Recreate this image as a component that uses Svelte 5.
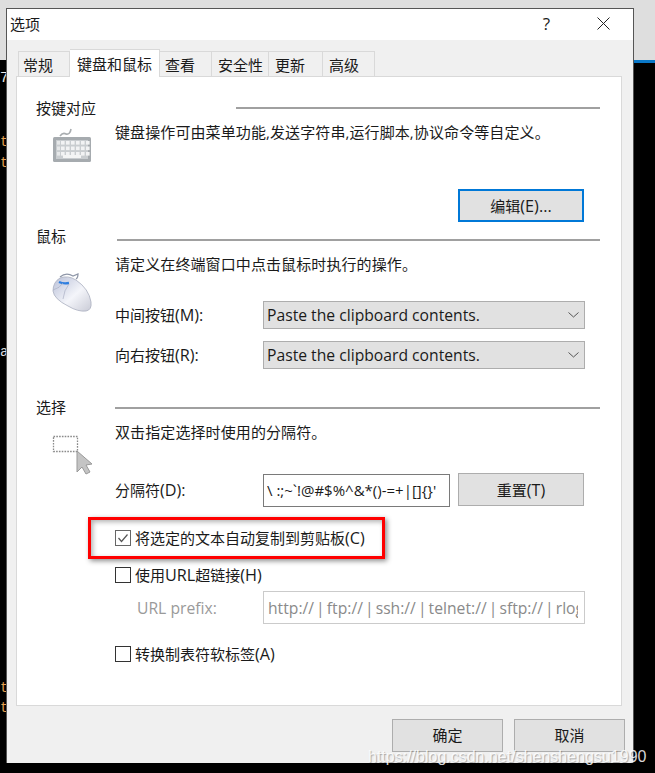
<script>
	const tabs = ['常规', '键盘和鼠标', '查看', '安全性', '更新', '高级'];
	const termBits = [
		{ text: '7', top: 70, color: '#eee' },
		{ text: 't', top: 134, color: '#e8a050' },
		{ text: 't', top: 155, color: '#e8a050' },
		{ text: 'a', top: 344, color: '#ddd' },
		{ text: 't', top: 680, color: '#e8a050' },
		{ text: 't', top: 700, color: '#e8a050' }
	];
	const keyRows = [
		[61, 66, 71, 76, 81, 86],
		[61, 66, 71, 76, 81, 86],
		[61, 66, 71, 76, 81, 86]
	];
</script>

<div class="desktop">
	<div class="strip"></div>
	<div class="blue-line"></div>
	{#each termBits as bit}
		<span class="term" style="top: {bit.top}px; color: {bit.color}">{bit.text}</span>
	{/each}

	<div class="window">
		<div class="titlebar">
			<span class="title">选项</span>
			<span class="help">?</span>
			<svg class="close" width="13" height="13" viewBox="0 0 13 13">
				<path d="M0.5 0.5 L12.5 12.5 M12.5 0.5 L0.5 12.5" stroke="#222" stroke-width="1" fill="none" />
			</svg>
		</div>

		<div class="body">
			<div class="tabs">
				{#each tabs as tab, i}
					<div class="tab" class:active={i === 1}>{tab}</div>
				{/each}
			</div>

			<div class="panel">
				<section class="keys">
					<div class="heading">
						<span class="heading-text">按键对应</span>
						<div class="rule"></div>
					</div>
					<div class="row">
						<div class="icon">
							<svg width="44" height="42" viewBox="50 126 44 42">
								<path d="M60 137 Q63 133 66 135 Q70 136 71 130" stroke="#a9adb0" stroke-width="1.6" fill="none" />
								<rect x="53" y="138" width="38" height="25" rx="1.5" fill="#a6abaf" />
								<rect x="56" y="141" width="32" height="19" fill="#c9cdd0" />
								{#each keyRows as row, r}
									{#each row as x}
										<rect {x} y={142 + r * 5.5} width="3.6" height="3.6" fill="#f2f3f4" />
									{/each}
									<rect x="57" y={142 + r * 5.5} width="3" height="3.6" fill="#e6e8e9" />
								{/each}
								<rect x="63" y="156" width="18" height="3" fill="#f4f5f5" />
							</svg>
						</div>
						<p class="desc">键盘操作可由菜单功能,发送字符串,运行脚本,协议命令等自定义。</p>
					</div>
					<div class="actions">
						<button class="btn focused">编辑<span class="lat">(E)...</span></button>
					</div>
				</section>

				<section class="mouse">
					<div class="heading">
						<span class="heading-text">鼠标</span>
						<div class="rule"></div>
					</div>
					<div class="row">
						<div class="icon">
							<svg width="44" height="46" viewBox="50 270 44 46">
								<defs>
									<linearGradient id="mouseBody" x1="0" y1="0" x2="1" y2="1">
										<stop offset="0" stop-color="#b9c0d8" />
										<stop offset="0.55" stop-color="#f4f5fa" />
										<stop offset="1" stop-color="#c9cbd6" />
									</linearGradient>
								</defs>
								<path d="M60 278 Q66 273 73 277 L78 275 Q78 279 76 280" stroke="#8f97a8" stroke-width="1.2" fill="none" />
								<path d="M53 292 Q53 283 60 279 Q68 276 76 281 Q89 290 91 303 Q92 311 86 312 Q78 313 68 307 Q54 300 53 292 Z" fill="url(#mouseBody)" stroke="#a9aebf" stroke-width="0.8" />
								<path d="M59 283 Q63 285 69 284" stroke="#2f7fe0" stroke-width="2.4" fill="none" />
								<path d="M69 285 Q64 291 63 300 M53 291 Q60 289 63 284" stroke="#aab0c4" stroke-width="0.7" fill="none" />
							</svg>
						</div>
						<p class="desc">请定义在终端窗口中点击鼠标时执行的操作。</p>
					</div>
					<div class="field first">
						<span class="label">中间按钮<span class="lat">(M):</span></span>
						<div class="select">
							<span>Paste the clipboard contents.</span>
							<svg width="11" height="6" viewBox="0 0 11 6">
								<path d="M0.5 0.5 L5.5 5 L10.5 0.5" stroke="#555" fill="none" />
							</svg>
						</div>
					</div>
					<div class="field">
						<span class="label">向右按钮<span class="lat">(R):</span></span>
						<div class="select">
							<span>Paste the clipboard contents.</span>
							<svg width="11" height="6" viewBox="0 0 11 6">
								<path d="M0.5 0.5 L5.5 5 L10.5 0.5" stroke="#555" fill="none" />
							</svg>
						</div>
					</div>
				</section>

				<section class="selection">
					<div class="heading">
						<span class="heading-text">选择</span>
						<div class="rule"></div>
					</div>
					<div class="row">
						<div class="icon">
							<svg width="44" height="46" viewBox="50 434 44 46">
								<rect x="53.5" y="437.5" width="24" height="15" fill="#fff" stroke="#8a8a8a" stroke-width="1.3" stroke-dasharray="1.6 1.2" />
								<path d="M77 452 L77 473 L82 468 L86 475 L90 473 L86 466 L92 465 Z" fill="#c4c4c4" stroke="#999" stroke-width="1" />
							</svg>
						</div>
						<p class="desc">双击指定选择时使用的分隔符。</p>
					</div>
					<div class="field sep">
						<span class="label">分隔符<span class="lat">(D):</span></span>
						<input class="text" readonly value={"\\ :;~`!@#$%^&*()-=+|[]{}'"} />
						<button class="btn reset">重置<span class="lat">(T)</span></button>
					</div>

					<div class="highlight">
						<label class="check">
							<span class="box checked">
								<svg width="14" height="14" viewBox="0 0 14 14">
									<path d="M2.5 7 L5.5 10.5 L11.5 3.5" stroke="#555" stroke-width="1.2" fill="none" />
								</svg>
							</span>
							<span>将选定的文本自动复制到剪贴板<span class="lat">(C)</span></span>
						</label>
					</div>
					<label class="check url">
						<span class="box"></span>
						<span>使用<span class="lat">URL</span>超链接<span class="lat">(H)</span></span>
					</label>
					<div class="field prefix">
						<span class="label muted">URL prefix:</span>
						<input class="text disabled" readonly value="http:// | ftp:// | ssh:// | telnet:// | sftp:// | rlogin://" />
					</div>
					<label class="check tabs-check">
						<span class="box"></span>
						<span>转换制表符软标签<span class="lat">(A)</span></span>
					</label>
				</section>
			</div>

			<div class="footer">
				<button class="btn footer-btn">确定</button>
				<button class="btn footer-btn">取消</button>
			</div>
		</div>
	</div>

	<span class="watermark">https://blog.csdn.net/shenshengsu1990</span>
</div>

<style>
	:global(body) {
		background: #000;
	}

	.desktop {
		position: relative;
		width: 655px;
		height: 773px;
		overflow: hidden;
		background: #000;
		font-family: "Open Sans", "Noto Sans CJK SC", sans-serif;
		font-size: 15px;
		color: #1a1a1a;
	}

	.lat {
		font-size: 16.2px;
	}

	.strip {
		position: absolute;
		left: 0;
		top: 0;
		width: 655px;
		height: 60px;
		background: #dedede;
	}

	.blue-line {
		position: absolute;
		left: 634px;
		top: 60px;
		width: 21px;
		height: 3px;
		background: #0a78c8;
	}

	.term {
		position: absolute;
		left: 0;
		font-family: "Liberation Mono", monospace;
		font-size: 14px;
		line-height: 16px;
	}

	.window {
		position: absolute;
		left: 6px;
		top: 8px;
		width: 628px;
		height: 755px;
		box-sizing: border-box;
		border: 1px solid #555;
		border-width: 1px 1px 0 1px;
		background: #f0f0f0;
		display: flex;
		flex-direction: column;
	}

	.titlebar {
		height: 31px;
		box-sizing: border-box;
		padding-bottom: 3px;
		background: #fff;
		display: flex;
		align-items: center;
		padding-left: 3px;
		flex: none;
	}

	.title {
		flex: 1;
	}

	.help {
		font-size: 17px;
		margin-right: 47px;
	}

	.close {
		margin-right: 23px;
	}

	.body {
		flex: 1;
		display: flex;
		flex-direction: column;
		padding: 10px 11px 0 9px;
		min-height: 0;
	}

	.tabs {
		display: flex;
		align-items: flex-end;
		height: 27px;
		padding-left: 2px;
		position: relative;
		z-index: 1;
		margin-bottom: -1px;
		flex: none;
	}

	.tab {
		box-sizing: border-box;
		height: 25px;
		line-height: 26px;
		border: 1px solid #d9d9d9;
		border-left: none;
		border-bottom: none;
		background: #f0f0f0;
		padding-left: 6px;
		white-space: nowrap;
		margin-bottom: 1px;
	}

	.tab:first-child {
		border-left: 1px solid #d9d9d9;
		padding-left: 4px;
	}

	.tab:nth-child(1) { width: 52px; }
	.tab:nth-child(2) { width: 90px; }
	.tab:nth-child(3) { width: 52px; padding-left: 5px; }
	.tab:nth-child(4) { width: 57px; }
	.tab:nth-child(5) { width: 54px; }
	.tab:nth-child(6) { width: 52px; }

	.tab.active {
		height: 28px;
		margin-bottom: 0;
		background: #fff;
		padding-left: 7px;
		line-height: 28px;
	}

	.panel {
		box-sizing: border-box;
		height: 630px;
		flex: none;
		background: #fff;
		border: 1px solid #d9d9d9;
		padding: 20px 21px 0 19px;
	}

	.heading {
		display: flex;
		align-items: center;
		height: 20px;
	}

	.heading-text {
		flex: none;
		white-space: nowrap;
	}

	.keys .heading-text { width: 200px; }
	.mouse .heading-text { width: 81px; }
	.selection .heading-text { width: 79px; }

	.rule {
		flex: 1;
		height: 2px;
		background: #a0a0a0;
		margin-top: 2px;
	}

	.mouse .rule { margin-top: 10px; }
	.selection .rule { margin-top: 4px; }

	.row {
		display: flex;
		align-items: flex-start;
		margin-top: 5px;
		height: 20px;
	}

	.mouse .row { margin-top: 9px; }
	.selection .row { margin-top: 6px; }

	.icon {
		width: 79px;
		flex: none;
		height: 20px;
		padding-left: 14px;
		box-sizing: border-box;
	}

	.icon svg {
		display: block;
		filter: blur(0.3px);
		margin-top: 3px;
	}

	.mouse .icon svg { margin-top: 15px; }
	.selection .icon svg { margin-top: 11px; }

	.desc {
		margin: 0;
		line-height: 20px;
		white-space: nowrap;
		letter-spacing: 0.1px;
	}

	.actions {
		display: flex;
		justify-content: flex-end;
		margin-top: 47px;
		padding-right: 16px;
	}

	.btn {
		box-sizing: border-box;
		background: #e1e1e1;
		border: 1px solid #adadad;
		font: inherit;
		color: #1a1a1a;
		padding: 0;
	}

	.btn.focused {
		width: 126px;
		height: 33px;
		border: 2px solid #0078d7;
	}

	.mouse {
		margin-top: 3px;
	}

	.field {
		display: flex;
		align-items: center;
		margin-left: 79px;
		margin-top: 12px;
		height: 28px;
	}

	.field.first {
		margin-top: 27px;
	}

	.label {
		width: 148px;
		flex: none;
		white-space: nowrap;
	}

	.muted {
		color: #9a9a9a;
	}

	.select {
		box-sizing: border-box;
		width: 322px;
		height: 28px;
		background: #e1e1e1;
		border: 1px solid #adadad;
		display: flex;
		align-items: center;
		justify-content: space-between;
		padding: 0 5px 0 3px;
		font-size: 15.7px;
	}

	.selection {
		margin-top: 27px;
	}

	.field.sep {
		margin-top: 31px;
		height: 34px;
	}

	.text {
		box-sizing: border-box;
		width: 187px;
		height: 33px;
		border: 1px solid #7a7a7a;
		background: #fff;
		font: inherit;
		color: #1a1a1a;
		padding: 0 2px 0 3px;
		outline: none;
		flex: none;
	}

	.btn.reset {
		width: 126px;
		height: 33px;
		margin-left: 8px;
		margin-top: -1px;
	}

	.highlight {
		box-sizing: border-box;
		width: 297px;
		height: 42px;
		margin: 10px 0 0 52px;
		padding-left: 24px;
		border: 3px solid #f00;
		box-shadow: 2px 2px 5px rgba(0, 0, 0, 0.45), inset 2px 2px 5px rgba(0, 0, 0, 0.3);
		display: flex;
		align-items: center;
	}

	.check {
		display: flex;
		align-items: center;
		gap: 4px;
		white-space: nowrap;
		height: 20px;
	}

	.box {
		box-sizing: border-box;
		width: 16px;
		height: 16px;
		border: 1px solid #333;
		background: #fff;
		display: flex;
		align-items: center;
		justify-content: center;
		flex: none;
	}

	.box.checked {
		border-color: #666;
	}

	.check.url {
		margin: 6px 0 0 79px;
	}

	.field.prefix {
		margin-top: 6px;
		height: 33px;
	}

	.label.muted {
		padding-left: 22px;
		width: 126px;
		box-sizing: content-box;
		font-size: 15.7px;
	}

	.text.disabled {
		width: 322px;
		border-color: #cbcbcb;
		color: #8a8a8a;
		padding: 0 6px 0 4px;
		font-size: 15.7px;
		word-spacing: -2px;
	}

	.check.tabs-check {
		margin: 20px 0 0 79px;
	}

	.footer {
		display: flex;
		justify-content: flex-end;
		gap: 11px;
		margin-top: 13px;
		margin-right: -3px;
	}

	.footer-btn {
		width: 111px;
		height: 33px;
		padding-bottom: 3px;
	}

	.watermark {
		position: absolute;
		left: 368px;
		top: 745px;
		font-family: "Liberation Sans", sans-serif;
		font-size: 16px;
		line-height: 24px;
		color: rgba(255, 255, 255, 0.85);
		white-space: nowrap;
		text-shadow: 1px 1px 1px rgba(0, 0, 0, 0.3);
	}
</style>
